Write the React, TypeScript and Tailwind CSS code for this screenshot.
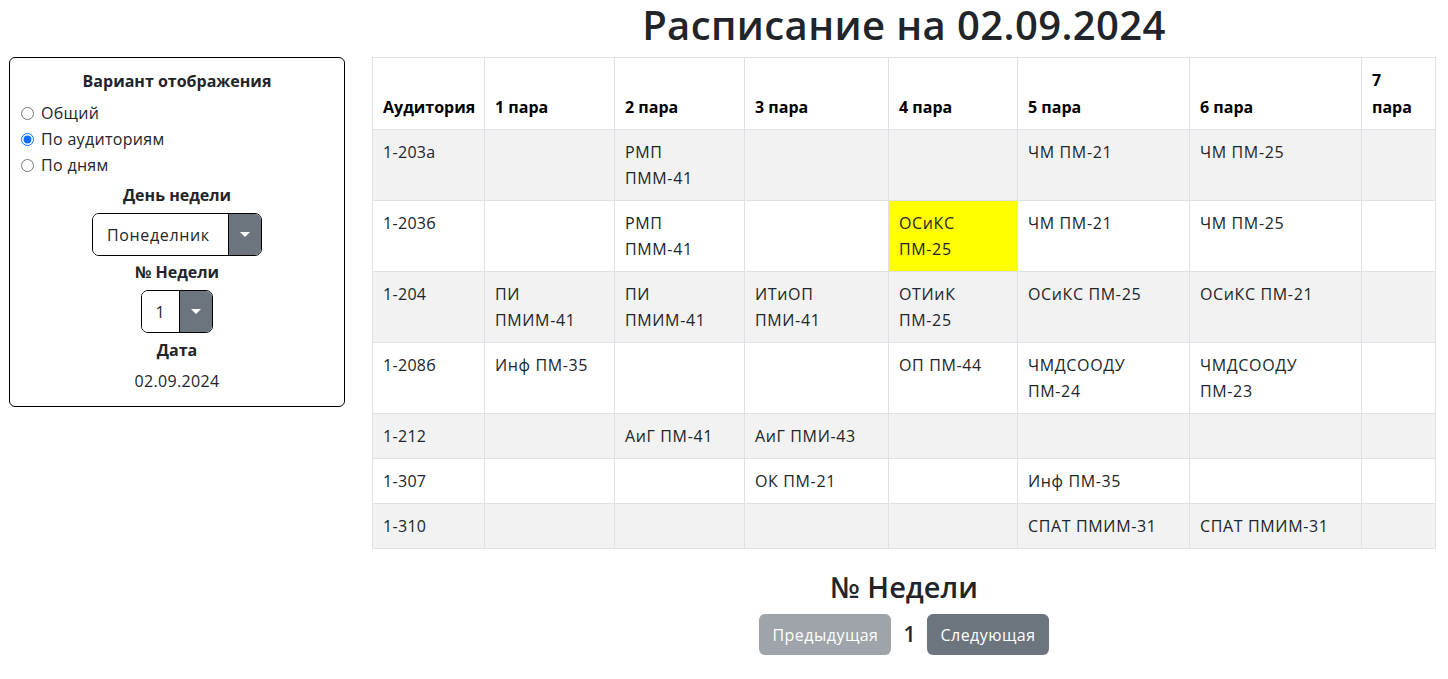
import React from 'react';

const cols = [
  { name: 'Аудитория', w: 112 },
  { name: '1 пара', w: 130 },
  { name: '2 пара', w: 130 },
  { name: '3 пара', w: 144 },
  { name: '4 пара', w: 129 },
  { name: '5 пара', w: 172 },
  { name: '6 пара', w: 172 },
  { name: '7 пара', w: 74 },
];

type Cell = string[] | null;

const rows: { room: string; cells: Cell[]; hl?: number }[] = [
  { room: '1-203а', cells: [null, ['РМП', 'ПММ-41'], null, null, ['ЧМ ПМ-21'], ['ЧМ ПМ-25'], null] },
  { room: '1-203б', cells: [null, ['РМП', 'ПММ-41'], null, ['ОСиКС', 'ПМ-25'], ['ЧМ ПМ-21'], ['ЧМ ПМ-25'], null], hl: 3 },
  { room: '1-204', cells: [['ПИ', 'ПМИМ-41'], ['ПИ', 'ПМИМ-41'], ['ИТиОП', 'ПМИ-41'], ['ОТИиК', 'ПМ-25'], ['ОСиКС ПМ-25'], ['ОСиКС ПМ-21'], null] },
  { room: '1-208б', cells: [['Инф ПМ-35'], null, null, ['ОП ПМ-44'], ['ЧМДСООДУ', 'ПМ-24'], ['ЧМДСООДУ', 'ПМ-23'], null] },
  { room: '1-212', cells: [null, ['АиГ ПМ-41'], ['АиГ ПМИ-43'], null, null, null, null] },
  { room: '1-307', cells: [null, null, ['ОК ПМ-21'], null, ['Инф ПМ-35'], null, null] },
  { room: '1-310', cells: [null, null, null, null, ['СПАТ ПМИМ-31'], ['СПАТ ПМИМ-31'], null] },
];

const Caret = () => (
  <svg width="10" height="6" viewBox="0 0 10 6">
    <path d="M0 0 L10 0 L5 5 Z" fill="#fff" />
  </svg>
);

const FakeSelect: React.FC<{ value: string; left: string; text: string }> = ({ value, left, text }) => (
  <div className="flex h-[43px] border border-black rounded-[7px] overflow-hidden">
    <div className={`${left} flex items-center ${text} bg-white tracking-[0.04em]`}>{value}</div>
    <div className="w-[33px] bg-[#6c757d] border-l border-black flex items-center justify-center">
      <Caret />
    </div>
  </div>
);

const Sidebar: React.FC = () => {
  const opts = ['Общий', 'По аудиториям', 'По дням'];
  return (
    <div className="self-start w-[337px] mt-[57px] border border-black rounded-[6px] pt-[11px] pb-[13px] px-[11px] flex flex-col text-[#212529] text-[16px]">
      <div className="text-center font-bold leading-6">Вариант отображения</div>
      <div className="mt-[7px] flex flex-col">
        {opts.map((o, i) => (
          <label key={o} className="flex items-center h-[26px] leading-[26px]">
            <input type="radio" name="mode" defaultChecked={i === 1} className="m-0 w-[13px] h-[13px] accent-[#0d6efd]" />
            <span className="ml-[7px] tracking-[0.02em]">{o}</span>
          </label>
        ))}
      </div>
      <div className="mt-[5px] text-center font-bold leading-6">День недели</div>
      <div className="mt-[6px] flex justify-center">
        <FakeSelect value="Понеделник" left="w-[135px]" text="pl-[14px]" />
      </div>
      <div className="mt-[4px] text-center font-bold leading-6">№ Недели</div>
      <div className="mt-[6px] flex justify-center">
        <FakeSelect value="1" left="w-[37px]" text="justify-center" />
      </div>
      <div className="mt-[5px] text-center font-bold leading-6">Дата</div>
      <div className="mt-[7px] text-center leading-6 tracking-[0.02em]">02.09.2024</div>
    </div>
  );
};

const App: React.FC = () => {
  return (
    <div className="w-[1448px] h-[679px] bg-white overflow-hidden font-['Open_Sans',sans-serif] text-[#212529]">
      <div className="flex pl-[9px] pr-[12px] gap-[27px]">
        <Sidebar />
        <div className="flex-1">
          <h1 className="text-center text-[40px] font-semibold tracking-[0.01em] leading-[50px] mb-[7px] mt-0">
            Расписание на 02.09.2024
          </h1>
          <table className="table-fixed border-collapse w-[1063px] text-[16px] leading-[26px]">
            <colgroup>
              {cols.map((c) => (
                <col key={c.name} style={{ width: c.w }} />
              ))}
            </colgroup>
            <thead>
              <tr>
                {cols.map((c) => (
                  <th key={c.name} className="border border-[#dee2e6] px-[10px] pt-[9px] pb-[8px] leading-[27px] text-left align-bottom font-bold text-black">
                    {c.name}
                  </th>
                ))}
              </tr>
            </thead>
            <tbody>
              {rows.map((r, ri) => (
                <tr key={r.room} className={ri % 2 === 0 ? 'bg-[#f2f2f2]' : 'bg-white'}>
                  <td className="border border-[#dee2e6] px-[10px] py-[9px] align-top tracking-[0.02em]">{r.room}</td>
                  {r.cells.map((c, ci) => (
                    <td
                      key={ci}
                      className={`border border-[#dee2e6] px-[10px] py-[9px] align-top tracking-[0.04em] ${r.hl === ci ? 'bg-[#ffff00]' : ''}`}
                    >
                      {c && c.map((l, li) => <div key={li}>{l}</div>)}
                    </td>
                  ))}
                </tr>
              ))}
            </tbody>
          </table>
          <div className="mt-[21px] flex flex-col items-center">
            <h3 className="text-[29px] font-semibold leading-[34px]">№ Недели</h3>
            <div className="mt-[10px] flex items-center">
              <button className="h-[41px] px-[13px] rounded-[6px] bg-[#6c757d] opacity-65 text-white text-[16px] tracking-[0.03em]">
                Предыдущая
              </button>
              <span className="mx-[12px] text-[21px] font-semibold leading-none">1</span>
              <button className="h-[41px] px-[13px] rounded-[6px] bg-[#6c757d] text-white text-[16px] tracking-[0.03em]">
                Следующая
              </button>
            </div>
          </div>
        </div>
      </div>
    </div>
  );
};

export default App;
